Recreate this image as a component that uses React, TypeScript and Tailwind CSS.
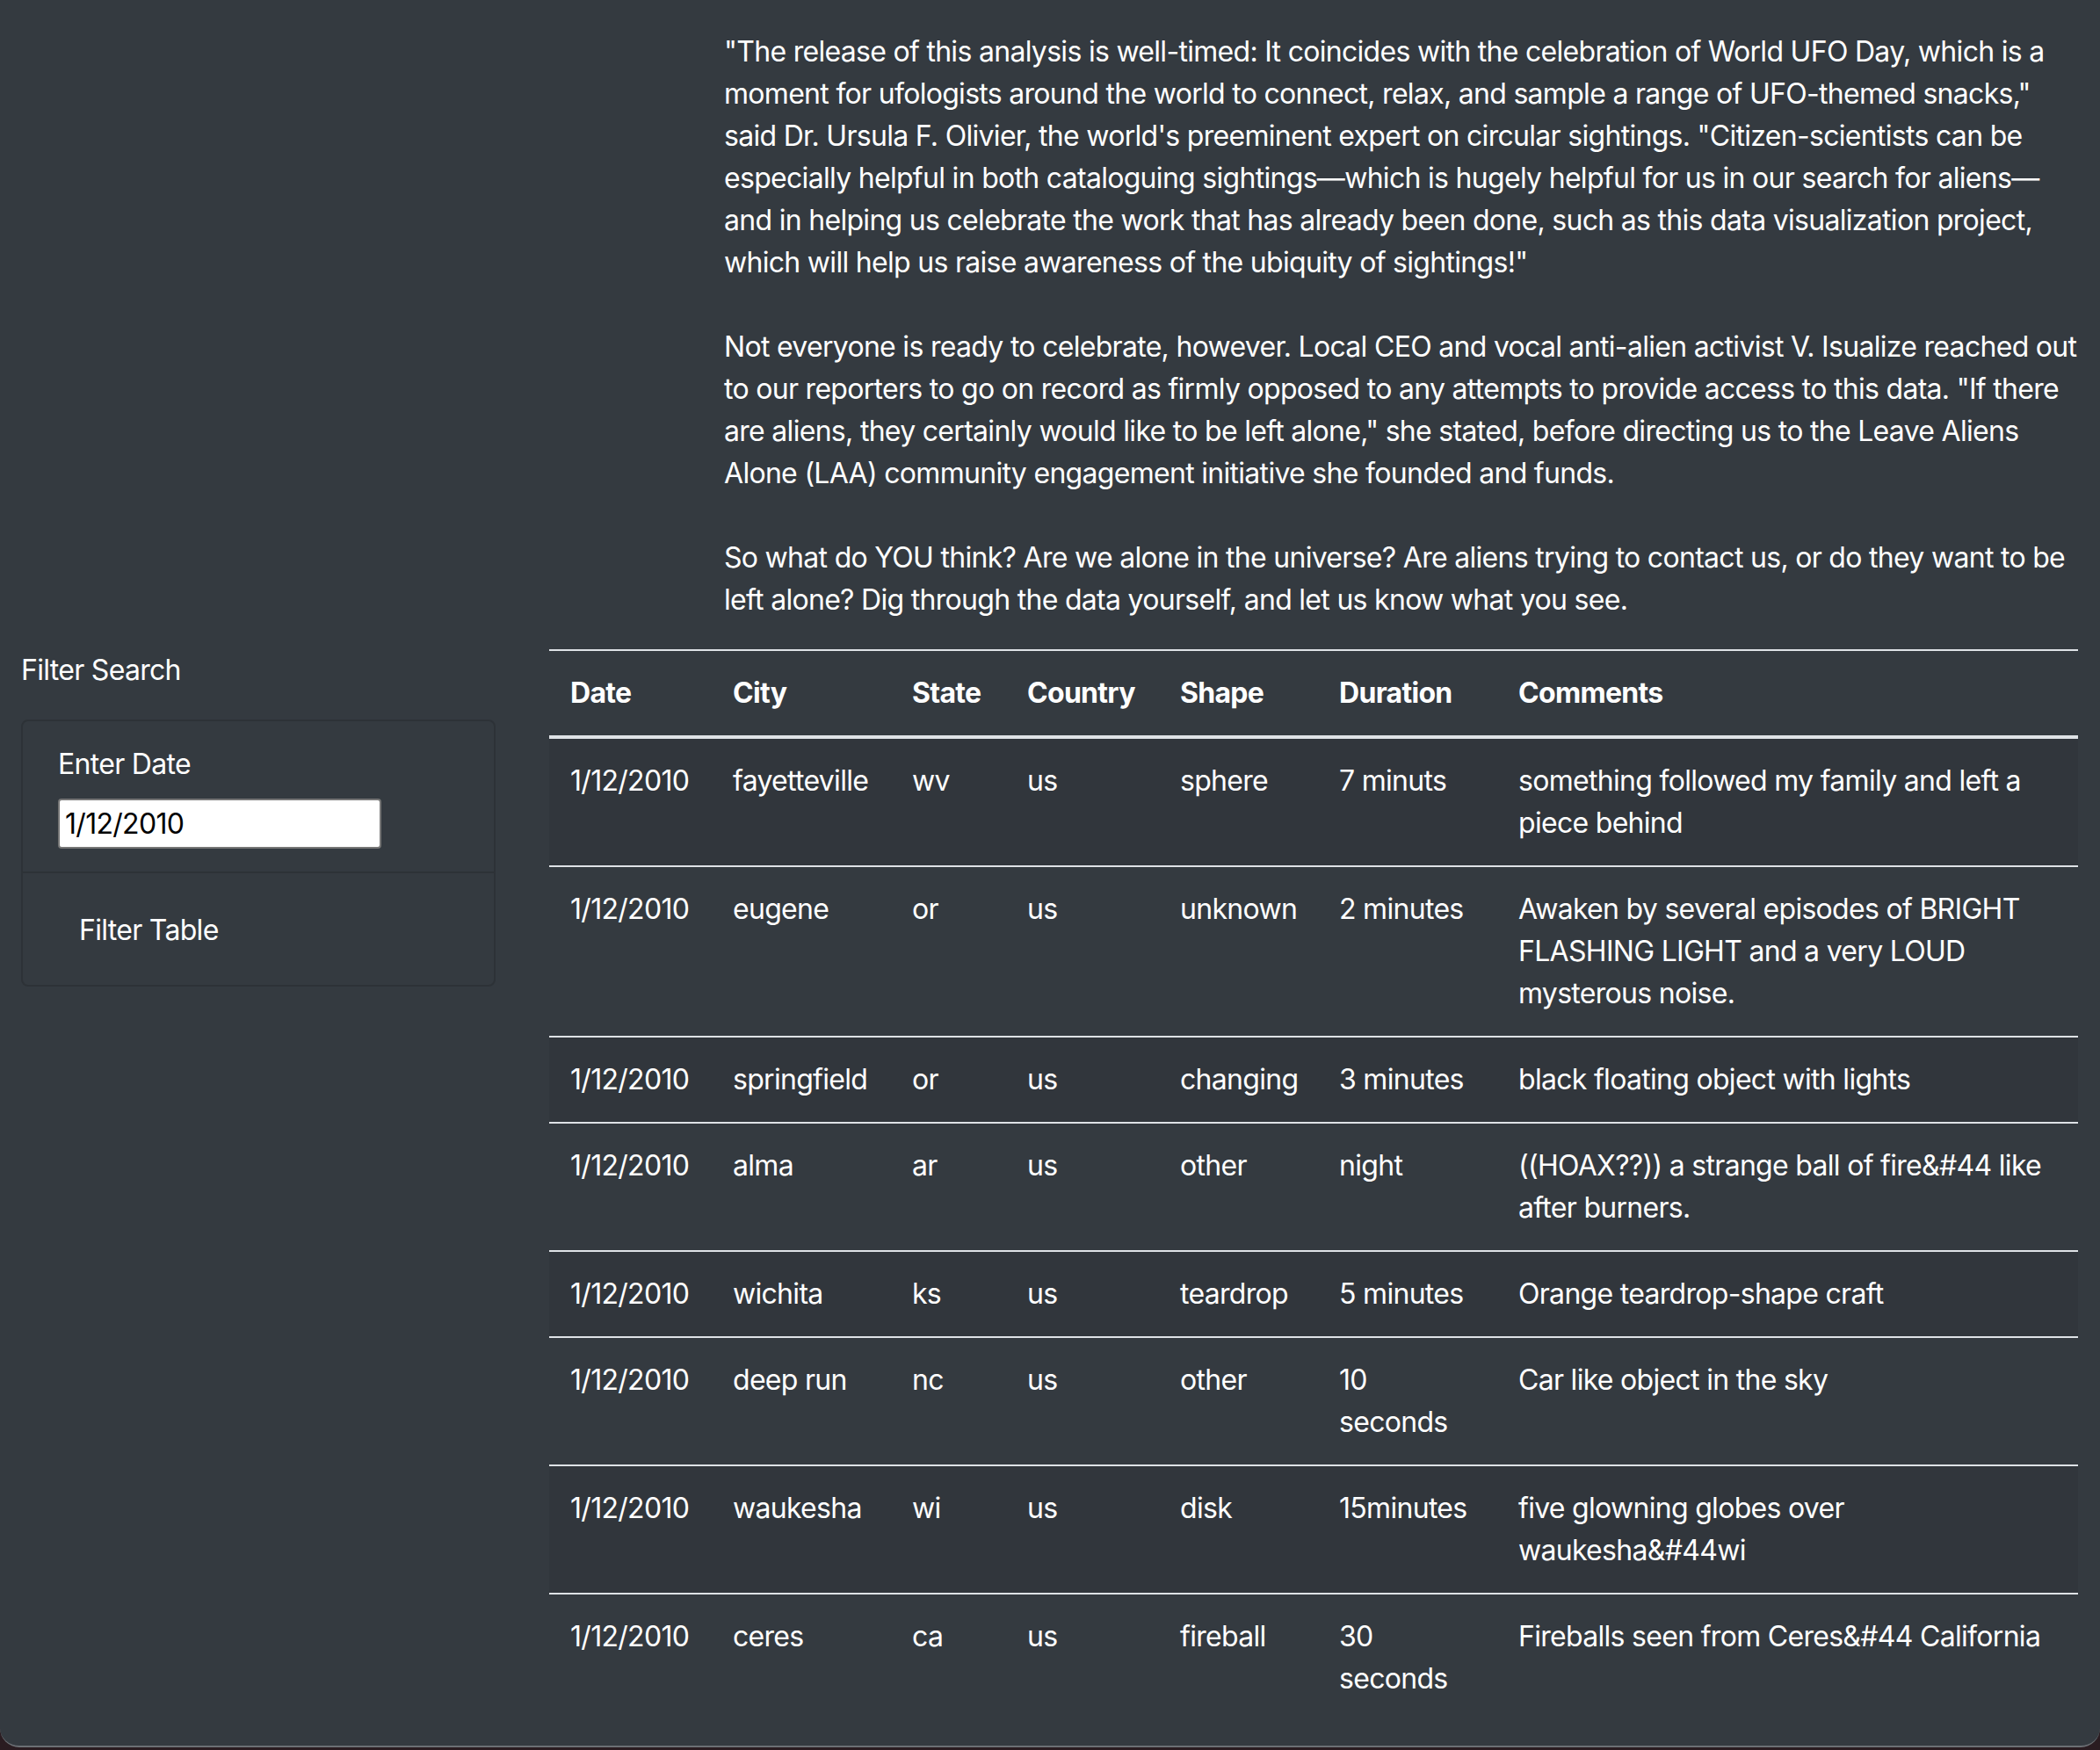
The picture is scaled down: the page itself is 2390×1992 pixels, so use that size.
import React from "react";

const rows: { date: string; city: string; state: string; country: string; shape: string; duration: React.ReactNode; comments: React.ReactNode }[] = [
  { date: "1/12/2010", city: "fayetteville", state: "wv", country: "us", shape: "sphere", duration: "7 minuts", comments: <>something followed my family and left a<br />piece behind</> },
  { date: "1/12/2010", city: "eugene", state: "or", country: "us", shape: "unknown", duration: "2 minutes", comments: <>Awaken by several episodes of BRIGHT<br />FLASHING LIGHT and a very LOUD<br />mysterous noise.</> },
  { date: "1/12/2010", city: "springfield", state: "or", country: "us", shape: "changing", duration: "3 minutes", comments: "black floating object with lights" },
  { date: "1/12/2010", city: "alma", state: "ar", country: "us", shape: "other", duration: "night", comments: <>((HOAX??)) a strange ball of fire&amp;#44 like<br />after burners.</> },
  { date: "1/12/2010", city: "wichita", state: "ks", country: "us", shape: "teardrop", duration: "5 minutes", comments: "Orange teardrop-shape craft" },
  { date: "1/12/2010", city: "deep run", state: "nc", country: "us", shape: "other", duration: <>10<br />seconds</>, comments: "Car like object in the sky" },
  { date: "1/12/2010", city: "waukesha", state: "wi", country: "us", shape: "disk", duration: "15minutes", comments: <>five glowning globes over<br />waukesha&amp;#44wi</> },
  { date: "1/12/2010", city: "ceres", state: "ca", country: "us", shape: "fireball", duration: <>30<br />seconds</>, comments: "Fireballs seen from Ceres&#44 California" },
];

const p1 = [
  "\"The release of this analysis is well-timed: It coincides with the celebration of World UFO Day, which is a",
  "moment for ufologists around the world to connect, relax, and sample a range of UFO-themed snacks,\"",
  "said Dr. Ursula F. Olivier, the world's preeminent expert on circular sightings. \"Citizen-scientists can be",
  "especially helpful in both cataloguing sightings\u2014which is hugely helpful for us in our search for aliens\u2014",
  "and in helping us celebrate the work that has already been done, such as this data visualization project,",
  "which will help us raise awareness of the ubiquity of sightings!\"",
];
const p2 = [
  "Not everyone is ready to celebrate, however. Local CEO and vocal anti-alien activist V. Isualize reached out",
  "to our reporters to go on record as firmly opposed to any attempts to provide access to this data. \"If there",
  "are aliens, they certainly would like to be left alone,\" she stated, before directing us to the Leave Aliens",
  "Alone (LAA) community engagement initiative she founded and funds.",
];
const p3 = [
  "So what do YOU think? Are we alone in the universe? Are aliens trying to contact us, or do they want to be",
  "left alone? Dig through the data yourself, and let us know what you see.",
];

function Para({ lines, last }: { lines: string[]; last?: boolean }) {
  return (
    <p className={last ? "mb-[32px]" : "mb-[48px]"}>
      {lines.map((l, i) => (
        <span key={i} className="block whitespace-nowrap">{l}</span>
      ))}
    </p>
  );
}

export default function App() {
  return (
    <div className="w-[2390px] h-[1992px] overflow-hidden bg-[#2a1c21] font-['Inter','Liberation_Sans',sans-serif] tracking-[-0.7px]">
      <div className="h-[1989px] bg-[#343a40] rounded-b-[22px] border-b-2 border-[#6b6f74] text-white text-[32px] leading-[48px]">
        <div className="pl-[824px] pt-[35px]">
          <Para lines={p1} />
          <Para lines={p2} />
          <Para lines={p3} last />
        </div>
        <div className="flex">
          <div className="ml-[24px] w-[540px]">
            <div className="h-[48px]">Filter Search</div>
            <div className="mt-[32px] border-2 border-[#2d3237] rounded-[8px]">
              <div className="px-[40px] pt-[25px] pb-[26px] border-b-2 border-[#2d3237]">
                <label className="block mb-[15px]">Enter Date</label>
                <input
                  defaultValue="1/12/2010"
                  className="block w-[368px] h-[57px] bg-white text-black border-2 border-[#767676] rounded-[4px] px-[6px] text-[32px] leading-[48px] tracking-[-0.7px] outline-none"
                />
              </div>
              <div className="px-[40px] pt-[29px] pb-[26px]">
                <button className="px-[24px] py-[12px] text-white tracking-[-0.7px]">Filter Table</button>
              </div>
            </div>
          </div>
          <div className="ml-[61px] w-[1740px]">
            <table className="w-full table-fixed border-collapse text-left">
              <colgroup>
                <col className="w-[185px]" />
                <col className="w-[204px]" />
                <col className="w-[131px]" />
                <col className="w-[174px]" />
                <col className="w-[181px]" />
                <col className="w-[204px]" />
                <col />
              </colgroup>
              <thead>
                <tr>
                  {["Date", "City", "State", "Country", "Shape", "Duration", "Comments"].map((h) => (
                    <th key={h} className="font-bold px-[24px] py-[24px] border-t-2 border-b-4 border-[#dee2e6] align-bottom">
                      {h}
                    </th>
                  ))}
                </tr>
              </thead>
              <tbody>
                {rows.map((r, i) => (
                  <tr key={i} className={i % 2 === 0 ? "bg-[#31363c]" : ""}>
                    {[r.date, r.city, r.state, r.country, r.shape, r.duration, r.comments].map((c, j) => (
                      <td key={j} className={`px-[24px] py-[24px] align-top whitespace-nowrap border-[#dee2e6] ${i === 0 ? "" : "border-t-2"}`}>
                        {c}
                      </td>
                    ))}
                  </tr>
                ))}
              </tbody>
            </table>
          </div>
        </div>
      </div>
    </div>
  );
}
